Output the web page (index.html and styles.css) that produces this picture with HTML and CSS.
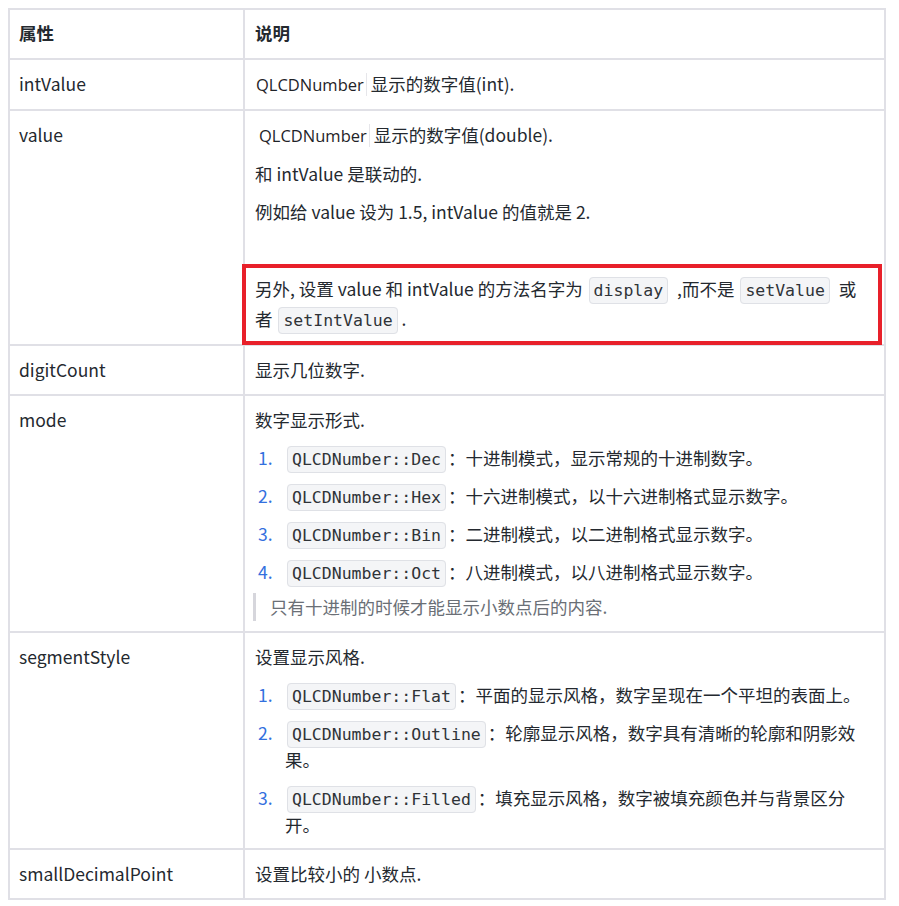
FILE: index.html
```html
<!DOCTYPE html>
<html lang="zh-CN">
<head>
<meta charset="utf-8">
<title>QLCDNumber 属性</title>
<link rel="stylesheet" href="styles.css">
</head>
<body>
<table class="props">
  <thead>
    <tr><th class="c-name">属性</th><th class="c-desc">说明</th></tr>
  </thead>
  <tbody>
    <tr>
      <td>intValue</td>
      <td><p><span class="cls">QLCDNumber</span> 显示的数字值(int).</p></td>
    </tr>
    <tr>
      <td>value</td>
      <td>
        <p><span class="cls cls-sp">QLCDNumber</span> 显示的数字值(double).</p>
        <p>和 intValue 是联动的.</p>
        <p>例如给 value 设为 1.5, intValue 的值就是 2.</p>
        <p>&nbsp;</p>
        <p class="hl">另外, 设置 value 和 intValue 的方法名字为 <code>display</code> ,而不是 <code>setValue</code> 或者 <code class="last">setIntValue</code> .</p>
      </td>
    </tr>
    <tr>
      <td>digitCount</td>
      <td><p>显示几位数字.</p></td>
    </tr>
    <tr>
      <td>mode</td>
      <td>
        <p>数字显示形式.</p>
        <ol class="steps">
          <li><span class="li-body"><code>QLCDNumber::Dec</code>：十进制模式，显示常规的十进制数字。</span></li>
          <li><span class="li-body"><code>QLCDNumber::Hex</code>：十六进制模式，以十六进制格式显示数字。</span></li>
          <li><span class="li-body"><code>QLCDNumber::Bin</code>：二进制模式，以二进制格式显示数字。</span></li>
          <li><span class="li-body"><code>QLCDNumber::Oct</code>：八进制模式，以八进制格式显示数字。</span></li>
        </ol>
        <blockquote><p>只有十进制的时候才能显示小数点后的内容.</p></blockquote>
      </td>
    </tr>
    <tr>
      <td>segmentStyle</td>
      <td>
        <p>设置显示风格.</p>
        <ol class="steps">
          <li><span class="li-body"><code>QLCDNumber::Flat</code>：平面的显示风格，数字呈现在一个平坦的表面上。</span></li>
          <li><span class="li-body"><code>QLCDNumber::Outline</code>：轮廓显示风格，数字具有清晰的轮廓和阴影效果。</span></li>
          <li><span class="li-body"><code>QLCDNumber::Filled</code>：填充显示风格，数字被填充颜色并与背景区分开。</span></li>
        </ol>
      </td>
    </tr>
    <tr>
      <td>smallDecimalPoint</td>
      <td><p>设置比较小的 小数点.</p></td>
    </tr>
  </tbody>
</table>
</body>
</html>
```

FILE: styles.css
```css
html, body {
  margin: 0;
  padding: 0;
  background: #ffffff;
}

body {
  padding: 8px;
  font-family: "Noto Sans CJK SC", "Noto Sans", sans-serif;
  font-size: 17.5px;
  line-height: 28px;
  color: #24292f;
}

.props {
  width: 878px;
  table-layout: fixed;
  border-collapse: separate;
  border-spacing: 0;
  border-top: 2px solid #e0e0e6;
  border-left: 2px solid #e0e0e6;
}

.props th,
.props td {
  border-right: 2px solid #e0e0e6;
  border-bottom: 2px solid #e0e0e6;
  padding: 10px 10px 10px 9px;
  text-align: left;
  vertical-align: top;
}

.props td + td,
.props th + th {
  padding-left: 10px;
}

.props th {
  font-weight: 700;
  padding-top: 9px;
  padding-bottom: 11px;
}

.c-name {
  width: 214px;
}

p {
  margin: 0 0 10px;
}

td > :last-child {
  margin-bottom: 0;
}

.cls {
  font-family: "Open Sans", "Noto Sans", sans-serif;
  font-size: 16.5px;
  font-weight: 500;
  color: #1f2328;
  padding: 0 2px 0 1px;
  border-right: 1px solid #e6e6ea;
}

.cls-sp {
  margin-left: 3px;
}

code {
  font-family: "DejaVu Sans Mono", "Liberation Mono", monospace;
  font-size: 16.5px;
  line-height: 1;
  color: #2f3337;
  background: #f4f5f7;
  border: 1px solid #dfe1e6;
  border-radius: 4px;
  padding: 3px 4px;
  margin: 0 2px;
}

.hl {
  position: relative;
  line-height: 30px;
  padding-right: 6px;
}

.hl code {
  margin: 0 5px 0 2px;
}

.hl code.last {
  margin-right: 0;
}

.hl::after {
  content: "";
  position: absolute;
  top: -10px;
  left: -13px;
  right: -8px;
  bottom: -11px;
  border: 4px solid #e8202a;
  pointer-events: none;
}

.steps {
  list-style: none;
  counter-reset: step;
  margin: 0 0 8px;
  padding: 0;
}

.steps li {
  counter-increment: step;
  display: grid;
  grid-template-columns: 30px 1fr;
  line-height: 27px;
  margin-bottom: 11px;
}

.steps li:last-child {
  margin-bottom: 0;
}

.steps li::before {
  content: counter(step) ".";
  color: #3370de;
  padding-left: 3px;
}

blockquote {
  margin: 0 0 0 -2px;
  padding: 0 0 0 14px;
  border-left: 3px solid #d6d6dc;
  color: #6a6f76;
}

blockquote p {
  margin: 0;
}
```
